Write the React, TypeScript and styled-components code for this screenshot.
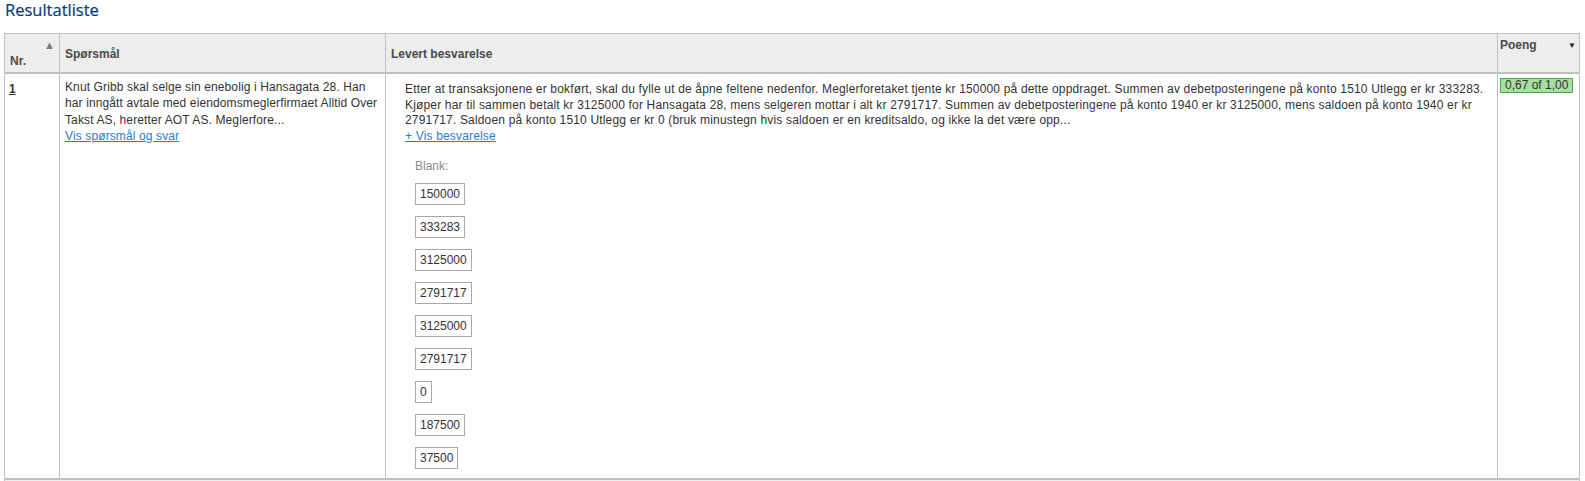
import styled, { createGlobalStyle } from 'styled-components'

const GlobalStyle = createGlobalStyle`
  body {
    margin: 0;
    font-family: "Liberation Sans", Arial, sans-serif;
    font-size: 12px;
    color: #333;
    background: #fff;
  }
`

const answers = ['150000', '333283', '3125000', '2791717', '3125000', '2791717', '0', '187500', '37500']

const answerText =
  'Etter at transaksjonene er bokført, skal du fylle ut de åpne feltene nedenfor. Meglerforetaket tjente kr 150000 på dette oppdraget. Summen av debetposteringene på konto 1510 Utlegg er kr 333283. Kjøper har til sammen betalt kr 3125000 for Hansagata 28, mens selgeren mottar i alt kr 2791717. Summen av debetposteringene på konto 1940 er kr 3125000, mens saldoen på konto 1940 er kr 2791717. Saldoen på konto 1510 Utlegg er kr 0 (bruk minustegn hvis saldoen er en kreditsaldo, og ikke la det være opp...'

export default function App() {
  return (
    <Page>
      <GlobalStyle />
      <Title>Resultatliste</Title>
      <Table>
        <colgroup>
          <col style={{ width: 55 }} />
          <col style={{ width: 326 }} />
          <col />
          <col style={{ width: 82 }} />
        </colgroup>
        <thead>
          <tr>
            <Th>
              <NrHead>
                <SortArrow>▲</SortArrow>
                <span>Nr.</span>
              </NrHead>
            </Th>
            <Th>Spørsmål</Th>
            <Th>Levert besvarelse</Th>
            <Th $top>
              <PoengHead>
                <span>Poeng</span>
                <DropArrow>▼</DropArrow>
              </PoengHead>
            </Th>
          </tr>
        </thead>
        <tbody>
          <tr>
            <Td>
              <NrLink href="#">1</NrLink>
            </Td>
            <Td>
              <Question>
                Knut Gribb skal selge sin enebolig i Hansagata 28. Han har inngått avtale med
                eiendomsmeglerfirmaet Alltid Over Takst AS, heretter AOT AS. Meglerfore...
                <br />
                <Link href="#">Vis spørsmål og svar</Link>
              </Question>
            </Td>
            <Td>
              <Answer>
                <AnswerText>
                  {answerText}
                  <br />
                  <Link href="#">+ Vis besvarelse</Link>
                </AnswerText>
                <BlankLabel>Blank:</BlankLabel>
                <BoxList>
                  {answers.map((a, i) => (
                    <ValueBox key={i}>{a}</ValueBox>
                  ))}
                </BoxList>
              </Answer>
            </Td>
            <ScoreTd>
              <Score>0,67 of 1,00</Score>
            </ScoreTd>
          </tr>
        </tbody>
        <tfoot>
          <tr>
            <FootTd colSpan={4} />
          </tr>
        </tfoot>
      </Table>
    </Page>
  )
}

const Page = styled.div`
  padding: 0 5px 0 4px;
`

const Title = styled.h2`
  margin: 0 0 13px 1px;
  font-family: "Open Sans", "DejaVu Sans", sans-serif;
  font-weight: 400;
  font-size: 16.5px;
  line-height: 20px;
  color: #0a3a76;
  -webkit-text-stroke: 0.2px #0a3a76;
`

const Table = styled.table`
  width: 100%;
  border-collapse: collapse;
  table-layout: fixed;
  border: 1px solid #c0c0c0;
`

const Th = styled.th<{ $top?: boolean }>`
  background: #ededed;
  border: 1px solid #c0c0c0;
  border-bottom: 2px solid #c0c0c0;
  height: 27px;
  padding: 5px 5px 4px;
  text-align: left;
  vertical-align: ${p => (p.$top ? 'top' : 'middle')};
  font-weight: bold;
  font-size: 12px;
  color: #4a4a4a;
`

const NrHead = styled.div`
  height: 28px;
  display: flex;
  flex-direction: column;
  justify-content: space-between;
  margin-top: 1px;
`

const SortArrow = styled.span`
  align-self: flex-end;
  font-size: 11px;
  line-height: 11px;
  color: #7a7a7a;
  margin-right: -1px;
`

const PoengHead = styled.div`
  display: flex;
  justify-content: space-between;
  align-items: center;
  margin: -1px -2px 0 -3px;
`

const DropArrow = styled.span`
  font-size: 8px;
  color: #222;
`

const Td = styled.td`
  border: 1px solid #c0c0c0;
  vertical-align: top;
  padding: 4px 5px 9px;
`

const ScoreTd = styled(Td)`
  padding: 4px 2px;
`

const FootTd = styled.td`
  background: #ededed;
  border-top: 2px solid #c0c0c0;
  height: 20px;
  padding: 0;
`

const NrLink = styled.a`
  display: inline-block;
  margin: 4px 0 0 -1px;
  color: #333;
  font-weight: bold;
  text-decoration: underline;
`

const Question = styled.div`
  line-height: 16.3px;
  margin-top: 1px;
  letter-spacing: 0.12px;
`

const Link = styled.a`
  color: #2a7ccc;
  text-decoration: underline;
`

const Answer = styled.div`
  padding: 4px 4px 0 14px;
`

const AnswerText = styled.div`
  line-height: 15.6px;
  letter-spacing: 0.17px;
`

const BlankLabel = styled.div`
  margin: 14px 0 0 10px;
  line-height: 16px;
  color: #8a8a8a;
`

const BoxList = styled.div`
  display: flex;
  flex-direction: column;
  align-items: flex-start;
  gap: 11px;
  padding: 9px 0 0 10px;
`

const ValueBox = styled.span`
  border: 1px solid #a8a8a8;
  padding: 0 4px;
  line-height: 20px;
  color: #333;
`

const Score = styled.span`
  display: inline-block;
  background: #a6e0a0;
  border: 1px solid #4caa4c;
  padding: 0 4px;
  line-height: 13px;
  color: #333;
`
